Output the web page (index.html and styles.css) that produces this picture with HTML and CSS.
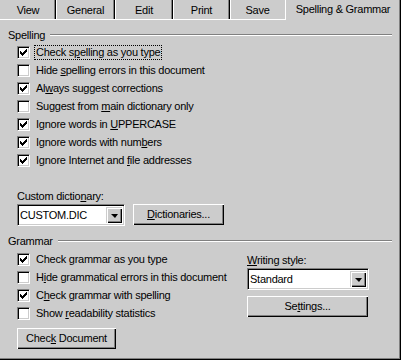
FILE: index.html
```html
<!DOCTYPE html>
<html>
<head>
  <meta charset="utf-8">
  <title>Options - Spelling &amp; Grammar</title>
  <link rel="stylesheet" href="styles.css">
</head>
<body>

<div class="dialog">

  <!-- tabs -->
  <div class="tabs">
    <div class="tab tab-view">View</div>
    <div class="tab tab-general">General</div>
    <div class="tab tab-edit">Edit</div>
    <div class="tab tab-print">Print</div>
    <div class="tab tab-save">Save</div>
    <div class="tab tab-active">Spelling &amp; Grammar</div>
  </div>

  <div class="panel">

    <!-- spelling -->
    <div class="group-title">Spelling</div>
    <div class="checks">
      <div class="check"><span class="box"><svg class="tick" width="7" height="7" viewBox="0 0 7 7"><path d="M6 0h1v3h-1zM5 1h1v3h-1zM4 2h1v3h-1zM3 3h1v3h-1zM2 4h1v3h-1zM1 3h1v3h-1zM0 2h1v3h-1z"/></svg></span><span class="label focus">Check s<u>p</u>elling as you type</span></div>
      <div class="check"><span class="box"></span><span class="label">Hide <u>s</u>pelling errors in this document</span></div>
      <div class="check"><span class="box"><svg class="tick" width="7" height="7" viewBox="0 0 7 7"><path d="M6 0h1v3h-1zM5 1h1v3h-1zM4 2h1v3h-1zM3 3h1v3h-1zM2 4h1v3h-1zM1 3h1v3h-1zM0 2h1v3h-1z"/></svg></span><span class="label">Al<u>w</u>ays suggest corrections</span></div>
      <div class="check"><span class="box"></span><span class="label">Suggest from <u>m</u>ain dictionary only</span></div>
      <div class="check"><span class="box"><svg class="tick" width="7" height="7" viewBox="0 0 7 7"><path d="M6 0h1v3h-1zM5 1h1v3h-1zM4 2h1v3h-1zM3 3h1v3h-1zM2 4h1v3h-1zM1 3h1v3h-1zM0 2h1v3h-1z"/></svg></span><span class="label">Ignore words in <u>U</u>PPERCASE</span></div>
      <div class="check"><span class="box"><svg class="tick" width="7" height="7" viewBox="0 0 7 7"><path d="M6 0h1v3h-1zM5 1h1v3h-1zM4 2h1v3h-1zM3 3h1v3h-1zM2 4h1v3h-1zM1 3h1v3h-1zM0 2h1v3h-1z"/></svg></span><span class="label">Ignore words with num<u>b</u>ers</span></div>
      <div class="check"><span class="box"><svg class="tick" width="7" height="7" viewBox="0 0 7 7"><path d="M6 0h1v3h-1zM5 1h1v3h-1zM4 2h1v3h-1zM3 3h1v3h-1zM2 4h1v3h-1zM1 3h1v3h-1zM0 2h1v3h-1z"/></svg></span><span class="label">Ignore Internet and <u>f</u>ile addresses</span></div>
    </div>

    <div class="dict">
      <div class="field-label">Custom dictio<u>n</u>ary:</div>
      <div class="dict-row">
        <div class="combo combo-dict">
          <span class="combo-text">CUSTOM.DIC</span>
          <span class="combo-btn"><span class="arrow"></span></span>
        </div>
        <div class="button btn-dict"><u>D</u>ictionaries...</div>
      </div>
    </div>

    <!-- grammar -->
    <div class="group-title">Grammar</div>
    <div class="grammar">
      <div class="grammar-left">
        <div class="check"><span class="box"><svg class="tick" width="7" height="7" viewBox="0 0 7 7"><path d="M6 0h1v3h-1zM5 1h1v3h-1zM4 2h1v3h-1zM3 3h1v3h-1zM2 4h1v3h-1zM1 3h1v3h-1zM0 2h1v3h-1z"/></svg></span><span class="label">Check <u>g</u>rammar as you type</span></div>
        <div class="check"><span class="box"></span><span class="label">H<u>i</u>de grammatical errors in this document</span></div>
        <div class="check"><span class="box"><svg class="tick" width="7" height="7" viewBox="0 0 7 7"><path d="M6 0h1v3h-1zM5 1h1v3h-1zM4 2h1v3h-1zM3 3h1v3h-1zM2 4h1v3h-1zM1 3h1v3h-1zM0 2h1v3h-1z"/></svg></span><span class="label">C<u>h</u>eck grammar with spelling</span></div>
        <div class="check"><span class="box"></span><span class="label">Show <u>r</u>eadability statistics</span></div>
        <div class="button btn-check">Chec<u>k</u> Document</div>
      </div>
      <div class="grammar-right">
        <div class="field-label"><u>W</u>riting style:</div>
        <div class="combo combo-style">
          <span class="combo-text">Standard</span>
          <span class="combo-btn"><span class="arrow"></span></span>
        </div>
        <div class="button btn-settings">Se<u>t</u>tings...</div>
      </div>
    </div>

  </div>
</div>

</body>
</html>
```

FILE: styles.css
```css
body {
  margin: 0;
  background-color: #cccccc;
  font-family: "Liberation Sans", Arial, sans-serif;
  font-size: 11px;
  letter-spacing: -0.25px;
  color: #000;
}
u {
  text-underline-offset: 1px;
}
.dialog {
  width: 401px;
  height: 360px;
  display: flex;
  flex-direction: column;
}

/* tabs */
.tabs {
  display: flex;
  height: 20px;
}
.tab {
  height: 19px;
  line-height: 21px;
  text-align: center;
  border-bottom: 1px solid #fff;
  box-shadow: inset 1px 0 #fff, inset -1px 0 #000, inset -2px 0 #808080;
}
.tab-view { width: 56px; box-shadow: inset -1px 0 #000, inset -2px 0 #808080; }
.tab-general { width: 59px; }
.tab-edit { width: 58px; }
.tab-print { width: 57px; }
.tab-save { width: 55px; box-shadow: inset 1px 0 #fff; }
.tab-active {
  width: 116px;
  height: 20px;
  line-height: 19px;
  border-bottom: none;
  box-shadow: inset 1px 0 #fff, inset -1px 0 #000, inset -2px 0 #808080;
}

/* panel */
.panel {
  flex: 1;
  padding: 0 9px 0 8px;
  box-shadow: inset -1px -1px #000, inset -2px -2px #808080;
}
.group-title {
  display: flex;
  align-items: center;
  height: 13px;
  margin-top: 8px;
}
.group-title::after {
  content: "";
  flex: 1;
  margin-left: 5px;
  border-top: 1px solid #808080;
  border-bottom: 1px solid #fff;
}
.checks {
  margin-top: 2px;
  padding-left: 9px;
}
.check {
  display: flex;
  align-items: center;
  height: 18px;
}
.box {
  width: 9px;
  height: 9px;
  flex: none;
  display: flex;
  align-items: center;
  justify-content: center;
  background: #fff;
  border-top: 1px solid #808080;
  border-left: 1px solid #808080;
  border-right: 1px solid #fff;
  border-bottom: 1px solid #fff;
  box-shadow: inset 1px 1px #000, inset -1px -1px #cccccc;
  padding: 1px;
}
.tick {
  display: block;
  fill: #000;
}
.label {
  margin-left: 4px;
  padding: 0 1px;
  line-height: 13px;
  border: 1px dotted transparent;
}
.label.focus {
  border-color: #000;
}

/* custom dictionary */
.dict {
  margin-top: 20px;
  padding-left: 9px;
}
.field-label {
  height: 14px;
  line-height: 14px;
}
.dict-row {
  display: flex;
  gap: 8px;
  margin-top: 1px;
}
.combo {
  display: flex;
  height: 16px;
  background: #fff;
  border-top: 1px solid #808080;
  border-left: 1px solid #808080;
  border-right: 1px solid #fff;
  border-bottom: 1px solid #fff;
  box-shadow: inset 1px 1px #000, inset -1px -1px #cccccc;
  padding: 2px;
}
.combo-text {
  flex: 1;
  line-height: 16px;
}
.combo-btn {
  width: 16px;
  height: 16px;
  flex: none;
  display: flex;
  align-items: center;
  justify-content: center;
  background: #cccccc;
  box-shadow: inset 1px 1px #cccccc, inset 2px 2px #fff, inset -1px -1px #000, inset -2px -2px #808080;
}
.arrow {
  width: 0;
  height: 0;
  border-left: 4px solid transparent;
  border-right: 3px solid transparent;
  border-top: 4px solid #000;
  margin-top: 1px;
}
.combo-dict { width: 102px; }

.button {
  height: 21px;
  line-height: 21px;
  text-align: center;
  background: #cccccc;
  box-shadow: inset 1px 1px #fff, inset -1px -1px #000, inset -2px -2px #808080;
}
.btn-dict { width: 91px; }

/* grammar */
.grammar {
  display: flex;
  margin-top: 3px;
  padding-left: 9px;
}
.grammar-left {
  width: 230px;
}
.btn-check {
  width: 99px;
  margin-top: 6px;
}
.grammar-right {
  padding-top: 3px;
}
.combo-style {
  width: 116px;
  margin-top: 1px;
}
.btn-settings {
  width: 121px;
  margin-top: 6px;
}
```
